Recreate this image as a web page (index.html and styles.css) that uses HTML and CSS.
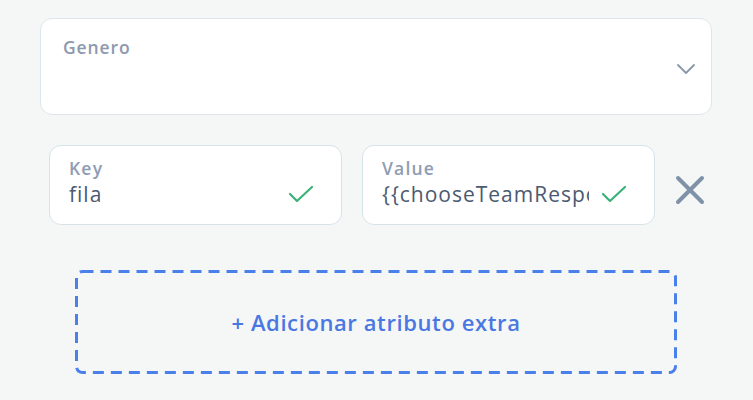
FILE: index.html
```html
<!DOCTYPE html>
<html>
<head>
<meta charset="utf-8">
<link rel="stylesheet" href="styles.css">
</head>
<body>
<div class="panel">
  <div class="select">
    <span class="select-label">Genero</span>
    <svg class="chevron" width="20" height="12" viewBox="0 0 20 12"><path d="M2 2 L10 10 L18 2" fill="none" stroke="#8a97a8" stroke-width="1.8" stroke-linecap="round" stroke-linejoin="round"/></svg>
  </div>
  <div class="row">
    <div class="field">
      <span class="field-label">Key</span>
      <div class="field-line">
        <span class="field-value">fila</span>
        <svg class="check" width="26" height="20" viewBox="0 0 26 20"><path d="M2 10 L9 17 L24 3" fill="none" stroke="#3cb179" stroke-width="2.2" stroke-linecap="round" stroke-linejoin="round"/></svg>
      </div>
    </div>
    <div class="field">
      <span class="field-label">Value</span>
      <div class="field-line">
        <span class="field-value clip">{{chooseTeamResponse}}</span>
        <svg class="check" width="26" height="20" viewBox="0 0 26 20"><path d="M2 10 L9 17 L24 3" fill="none" stroke="#3cb179" stroke-width="2.2" stroke-linecap="round" stroke-linejoin="round"/></svg>
      </div>
    </div>
    <svg class="remove" width="30" height="30" viewBox="0 0 30 30"><path d="M3 3 L27 27 M27 3 L3 27" fill="none" stroke="#7f92a8" stroke-width="4" stroke-linecap="round"/></svg>
  </div>
  <div class="add">
    <svg class="dash" width="602" height="104" viewBox="0 0 602 104"><rect x="1.5" y="1.5" width="599" height="101" rx="6" ry="6" fill="none" stroke="#4a80ea" stroke-width="3" stroke-dasharray="11 7"/></svg>
    <span class="add-text">+ Adicionar atributo extra</span>
  </div>
</div>
</body>
</html>
```
FILE: styles.css
```css
html, body {
  margin: 0;
  padding: 0;
  background: #f5f7f7;
  font-family: "Open Sans", "Noto Sans", sans-serif;
}
.panel {
  width: 753px;
  height: 400px;
  box-sizing: border-box;
  padding: 18px 41px 0 40px;
  display: flex;
  flex-direction: column;
}
.select {
  height: 97px;
  box-sizing: border-box;
  background: #fff;
  border: 1.5px solid #dce6ec;
  border-radius: 12px;
  padding: 15px 15px 0 22px;
  display: flex;
  justify-content: space-between;
}
.select-label {
  font-size: 17.5px;
  font-weight: 600;
  letter-spacing: 0.9px;
  color: #8d99ad;
  line-height: 26px;
}
.chevron {
  margin-top: 29px;
}
.row {
  margin-top: 30px;
  padding-left: 9px;
  display: flex;
  align-items: center;
  gap: 20px;
}
.field {
  width: 293px;
  height: 80px;
  box-sizing: border-box;
  background: #fff;
  border: 1.5px solid #d6e4ea;
  border-radius: 12px;
  padding: 10px 27px 0 19px;
  display: flex;
  flex-direction: column;
}
.field-label {
  font-size: 17.5px;
  font-weight: 600;
  letter-spacing: 1.2px;
  color: #8f9cb3;
  line-height: 24px;
}
.field-line {
  display: flex;
  align-items: center;
  justify-content: space-between;
  gap: 12px;
  margin-top: 0;
}
.field-value {
  font-size: 21px;
  letter-spacing: 1px;
  color: #4b5a70;
  line-height: 28px;
  white-space: nowrap;
  overflow: hidden;
}
.clip {
  flex: 1;
  min-width: 0;
}
.check {
  flex: none;
}
.remove {
  margin-left: 0;
  margin-top: 10px;
}
.add {
  position: relative;
  margin: 45px 35px 0 35px;
  height: 104px;
  box-sizing: border-box;
  display: flex;
  align-items: center;
  justify-content: center;
}
.dash {
  position: absolute;
  left: 0;
  top: 0;
}
.add-text {
  position: relative;
  font-size: 22px;
  font-weight: 600;
  letter-spacing: 0.6px;
  color: #4a78e2;
}
```
